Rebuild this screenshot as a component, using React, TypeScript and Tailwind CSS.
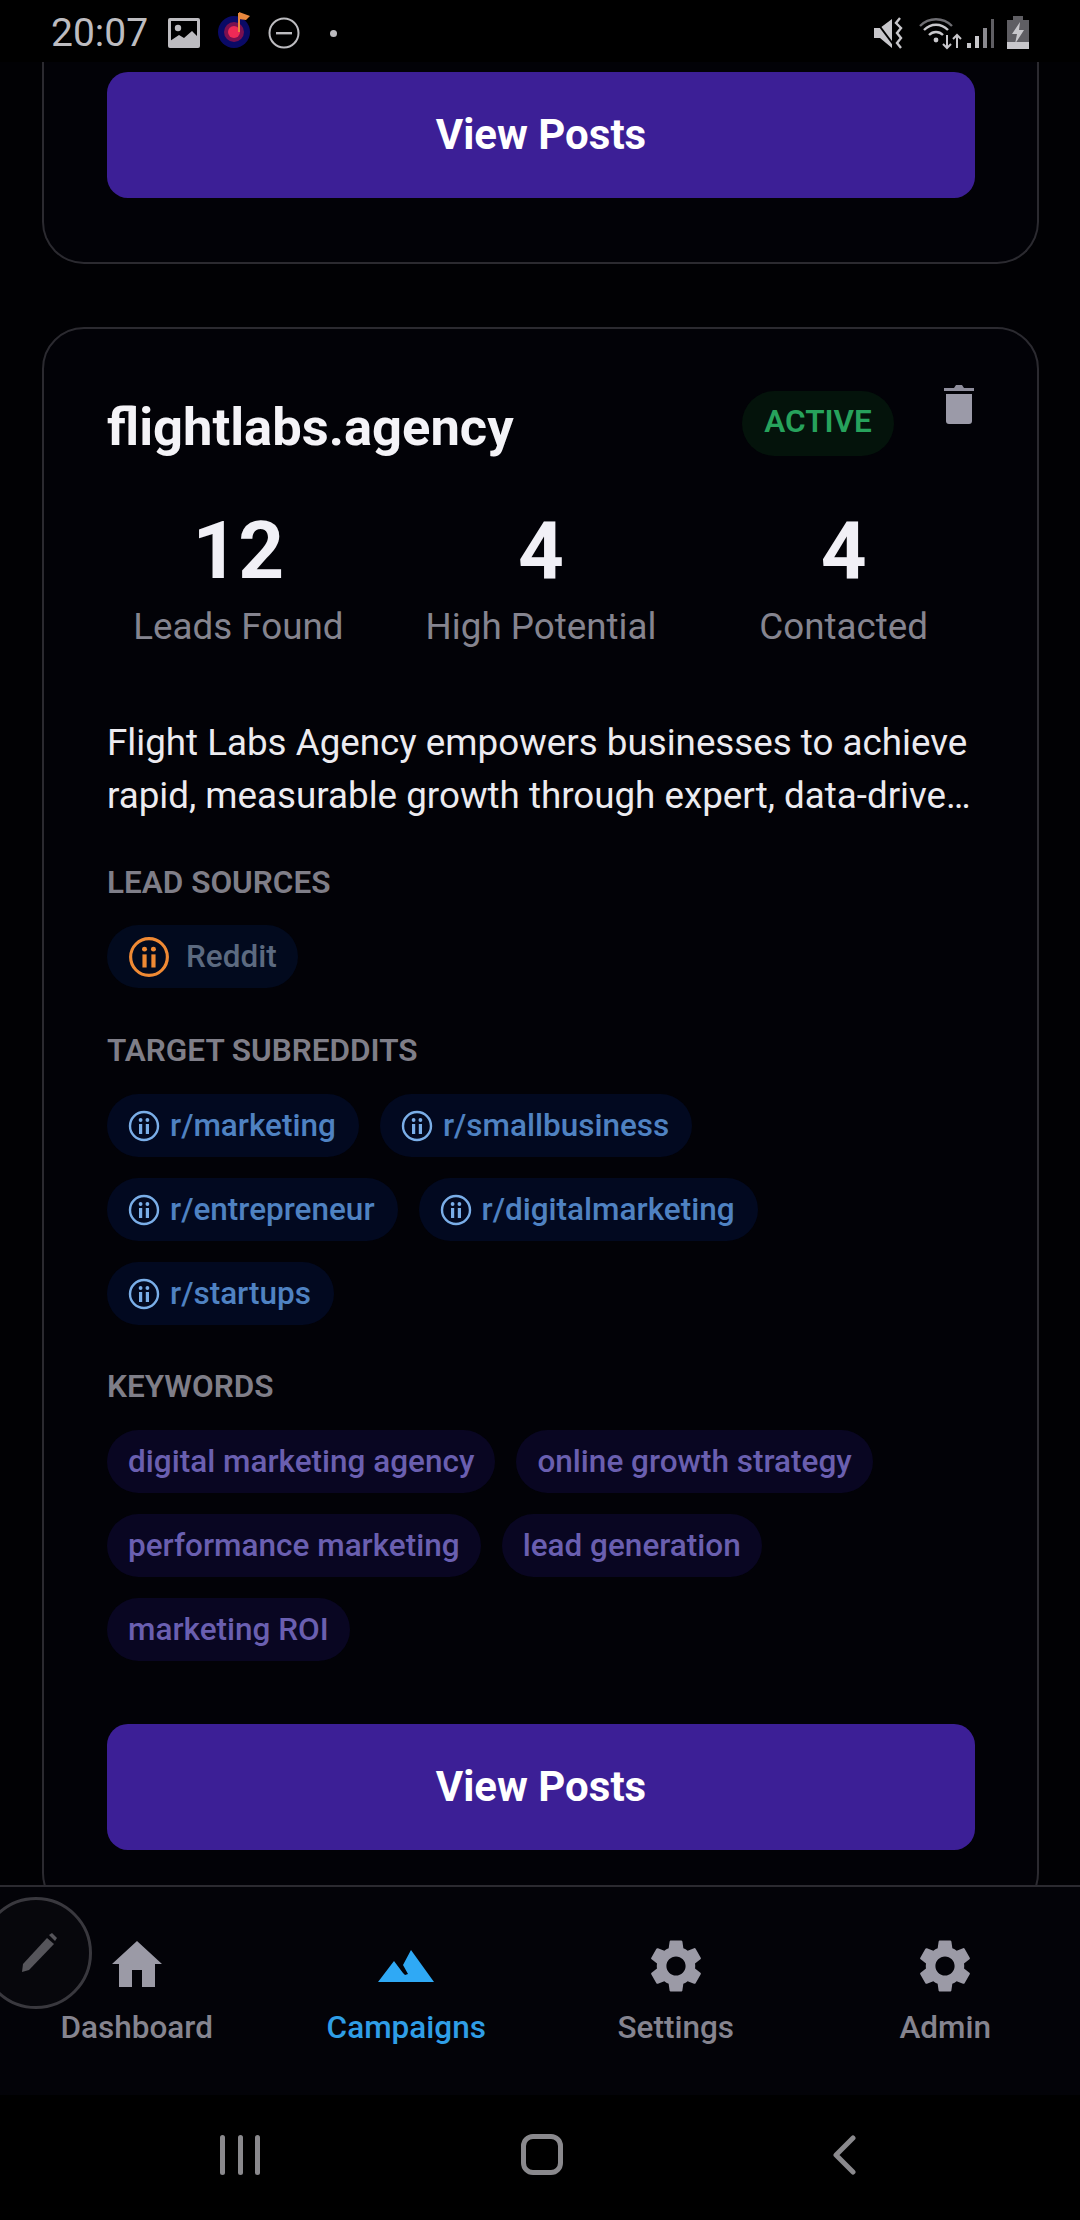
import React from "react";

const roboto = "font-['Roboto',sans-serif]";

function InfoIcon({ size, color }: { size: number; color: string }) {
  return (
    <svg width={size} height={size} viewBox="0 0 32 32" fill="none" className="shrink-0">
      <circle cx="16" cy="16" r="14" stroke={color} strokeWidth="2.4" />
      <rect x="11" y="14" width="3.2" height="10" fill={color} />
      <rect x="17.8" y="14" width="3.2" height="10" fill={color} />
      <circle cx="12.6" cy="10" r="1.9" fill={color} />
      <circle cx="19.4" cy="10" r="1.9" fill={color} />
    </svg>
  );
}

function SubTag({ label }: { label: string }) {
  return (
    <div className="flex h-[63px] items-center gap-[10px] rounded-full bg-[#020920] pl-[21px] pr-[23px] text-[31.5px] font-medium text-[#4f82c2]">
      <InfoIcon size={32} color="#7aaee8" />
      <span>{label}</span>
    </div>
  );
}

function KeyTag({ label }: { label: string }) {
  return (
    <div className="flex h-[63px] items-center rounded-full bg-[#090622] px-[21px] text-[31.5px] font-medium text-[#6a5fb0]">
      {label}
    </div>
  );
}

function Stat({ value, label }: { value: string; label: string }) {
  return (
    <div className="flex flex-col items-center">
      <div className="text-[80px] leading-[92px] font-bold text-[#f1f0f6]">{value}</div>
      <div className="mt-[8px] text-[36.75px] leading-[44px] text-[#85848f]">{label}</div>
    </div>
  );
}

function SectionLabel({ children }: { children: React.ReactNode }) {
  return <div className="text-[31.5px] leading-[42px] font-semibold text-[#7f7e88]">{children}</div>;
}

function ViewPosts() {
  return (
    <button className="flex h-[126px] w-full items-center justify-center rounded-[21px] bg-[#3c1f96] pb-[2px] text-[42px] font-bold text-white">
      View Posts
    </button>
  );
}

function GearIcon() {
  return (
    <svg width="64" height="64" viewBox="0 0 24 24" fill="#9b9aa6">
      <path d="M19.14 12.94c.04-.3.06-.61.06-.94 0-.32-.02-.64-.07-.94l2.03-1.58a.49.49 0 0 0 .12-.61l-1.92-3.32a.488.488 0 0 0-.59-.22l-2.39.96c-.5-.38-1.03-.7-1.62-.94l-.36-2.54a.484.484 0 0 0-.48-.41h-3.84c-.24 0-.43.17-.47.41l-.36 2.54c-.59.24-1.13.57-1.62.94l-2.39-.96c-.22-.08-.47 0-.59.22L2.74 8.87c-.12.21-.08.47.12.61l2.03 1.58c-.05.3-.09.63-.09.94s.02.64.07.94l-2.03 1.58a.49.49 0 0 0-.12.61l1.92 3.32c.12.22.37.29.59.22l2.39-.96c.5.38 1.03.7 1.62.94l.36 2.54c.05.24.24.41.48.41h3.84c.24 0 .44-.17.47-.41l.36-2.54c.59-.24 1.13-.56 1.62-.94l2.39.96c.22.08.47 0 .59-.22l1.92-3.32c.12-.22.07-.47-.12-.61l-2.01-1.58zM12 15.6c-1.98 0-3.6-1.62-3.6-3.6s1.62-3.6 3.6-3.6 3.6 1.62 3.6 3.6-1.62 3.6-3.6 3.6z" />
    </svg>
  );
}

function Tab({ icon, label, active }: { icon: React.ReactNode; label: string; active?: boolean }) {
  return (
    <div className="flex flex-1 flex-col items-center">
      <div className="flex h-[70px] items-center justify-center">{icon}</div>
      <div className={`mt-[9px] text-[31.5px] leading-[36px] font-medium ${active ? "text-[#2f9ee6]" : "text-[#85848f]"}`}>
        {label}
      </div>
    </div>
  );
}

function StatusBar() {
  return (
    <div className="flex h-[62px] shrink-0 items-center justify-between bg-black pt-[4px] pl-[51px] pr-[51px]">
      <div className="flex items-center">
        <span className="text-[39px] leading-none text-[#bdbcc0]">20:07</span>
        <svg width="32" height="30" viewBox="0 0 32 30" className="ml-[20px]">
          <rect width="32" height="30" rx="2" fill="#bdbcc0" />
          <rect x="3" y="3" width="26" height="20" fill="#000" />
          <circle cx="10" cy="10" r="3.2" fill="#bdbcc0" />
          <path d="M2 28V23L11 17L16 20L24 13L30 19V28Z" fill="#bdbcc0" />
        </svg>
        <svg width="34" height="38" viewBox="0 0 34 38" className="ml-[18px] -mt-[6px]">
          <circle cx="16" cy="21" r="16" fill="#0a0a66" />
          <circle cx="16" cy="21" r="10" fill="#7a1050" />
          <circle cx="16" cy="21" r="6" fill="#ee2a56" />
          <path d="M20 21V2H22V21Z" fill="#e8873e" />
          <path d="M21 1L32 5L28 9L21 8Z" fill="#e8873e" />
        </svg>
        <svg width="32" height="32" viewBox="0 0 32 32" className="ml-[16px]" fill="none">
          <circle cx="16" cy="16" r="14.5" stroke="#bdbcc0" strokeWidth="2" />
          <rect x="8" y="15" width="16" height="2.4" fill="#bdbcc0" />
        </svg>
        <span className="ml-[30px] h-[7px] w-[7px] rounded-full bg-[#bdbcc0]" />
      </div>
      <div className="flex items-center">
        <svg width="32" height="34" viewBox="0 0 32 34" fill="none">
          <path d="M1 12H7L19 3V32L7 22H1Z" fill="#c8c7cb" />
          <path d="M2 4L20 28" stroke="#000" strokeWidth="2" />
          <path d="M27 2L23 7L28 12L24 17L28 22L24 27L28 32" stroke="#c8c7cb" strokeWidth="2.4" />
        </svg>
        <svg width="44" height="34" viewBox="0 0 44 34" fill="none" className="ml-[13px]">
          <path d="M2 10C11 1 25 1 34 10" stroke="#6e6d72" strokeWidth="2.4" />
          <path d="M6 14C13 7 23 7 30 14" stroke="#c8c7cb" strokeWidth="2.4" />
          <path d="M11 19C15 15 21 15 25 19" stroke="#c8c7cb" strokeWidth="2.4" />
          <circle cx="18" cy="24" r="2.4" fill="#c8c7cb" />
          <path d="M29 19V32M25 28L29 32L33 28" stroke="#c8c7cb" strokeWidth="2" />
          <path d="M39 32V19M35 23L39 19L43 23" stroke="#c8c7cb" strokeWidth="2" />
        </svg>
        <svg width="28" height="32" viewBox="0 0 28 32" className="ml-[5px]">
          <rect x="0" y="26" width="4" height="5" fill="#c8c7cb" />
          <rect x="8" y="19" width="4" height="12" fill="#c8c7cb" />
          <rect x="16" y="11" width="4" height="20" fill="#8a898e" />
          <rect x="24" y="2" width="3" height="29" fill="#5f5e63" />
        </svg>
        <svg width="22" height="34" viewBox="0 0 22 34" className="ml-[12px]">
          <rect x="6" y="0" width="10" height="4" fill="#5f5e63" />
          <rect x="0" y="4" width="22" height="26" fill="#5f5e63" />
          <rect x="0" y="26" width="22" height="7" fill="#c8c7cb" />
          <path d="M13 6L5 18H10L8 28L17 14H12Z" fill="#c8c7cb" />
        </svg>
      </div>
    </div>
  );
}

export default function App() {
  return (
    <div className={`flex h-[2220px] w-[1080px] flex-col overflow-hidden bg-black ${roboto}`}>
      <StatusBar />

      <main className="min-h-0 flex-1 overflow-hidden bg-[#010104] pl-[42px] pr-[41px]">
        <div className="rounded-b-[42px] border-x-2 border-b-2 border-[#2b2a30] bg-[#020207] pl-[63px] pr-[62px] pt-[10px] pb-[64px]">
          <ViewPosts />
        </div>

        <div className="mt-[63px] rounded-[42px] border-2 border-[#2b2a30] bg-[#020207] pl-[63px] pr-[62px] pt-[58px]">
          <div className="flex items-start">
            <h2 className="mt-[10px] flex-1 text-[52.5px] leading-[60px] font-bold text-[#f4f3f7]">flightlabs.agency</h2>
            <div className="mt-[4px] mr-[49px] flex h-[65px] w-[152px] items-center justify-center rounded-full bg-[#04130b] pb-[3px] text-[31.5px] font-semibold text-[#27a25c]">
              ACTIVE
            </div>
            <svg width="32" height="40" viewBox="0 0 32 40" className="-mt-[3px]">
              <path d="M1 4H11L13 1H19L21 4H31V7H1Z" fill="#8f8e9c" />
              <path d="M3 10H29V37C29 39 28 40 26 40H6C4 40 3 39 3 37Z" fill="#9b9aa8" />
            </svg>
          </div>

          <div className="-mx-[20px] mt-[48px] grid grid-cols-3">
            <Stat value="12" label="Leads Found" />
            <Stat value="4" label="High Potential" />
            <Stat value="4" label="Contacted" />
          </div>

          <p className="mt-[68px] text-[36.75px] leading-[52.5px] text-[#ecebf0]">
            Flight Labs Agency empowers businesses to achieve
            <br />
            rapid, measurable growth through expert, data-drive…
          </p>

          <div className="mt-[40px]"><SectionLabel>LEAD SOURCES</SectionLabel></div>
          <div className="mt-[21px] flex">
            <div className="flex h-[63px] items-center gap-[16px] rounded-full bg-[#020a1e] px-[21px] text-[31.5px] font-medium text-[#5c6a80]">
              <InfoIcon size={42} color="#f08a34" />
              <span>Reddit</span>
            </div>
          </div>

          <div className="mt-[42px]"><SectionLabel>TARGET SUBREDDITS</SectionLabel></div>
          <div className="mt-[22px] flex flex-wrap gap-x-[21px] gap-y-[21px]">
            {["r/marketing", "r/smallbusiness", "r/entrepreneur", "r/digitalmarketing", "r/startups"].map((s) => (
              <SubTag key={s} label={s} />
            ))}
          </div>

          <div className="mt-[41px]"><SectionLabel>KEYWORDS</SectionLabel></div>
          <div className="mt-[22px] flex flex-wrap gap-x-[21px] gap-y-[21px]">
            {["digital marketing agency", "online growth strategy", "performance marketing", "lead generation", "marketing ROI"].map((s) => (
              <KeyTag key={s} label={s} />
            ))}
          </div>

          <div className="mt-[63px] pb-[63px]"><ViewPosts /></div>
        </div>
      </main>

      <nav className="relative flex h-[210px] shrink-0 border-t-2 border-[#2b2a30] bg-[#030308] pl-[2px] pt-[44px]">
        <div className="absolute left-[-20px] top-[10px] flex h-[112px] w-[112px] items-center justify-center rounded-full border-[3px] border-[#39383e] bg-[#07070c]">
          <svg width="40" height="42" viewBox="0 0 40 42" className="ml-[6px]">
            <path d="M4 32L28 6L35 12L10 38L3 40Z" fill="#56555b" />
            <path d="M30 3L33 1L38 6L36 9Z" fill="#56555b" />
          </svg>
        </div>
        <Tab
          label="Dashboard"
          icon={
            <svg width="50" height="46" viewBox="0 0 50 46" className="-mt-[5px]">
              <path d="M25 0L50 23H43V46H30V29H20V46H7V23H0Z" fill="#9b9aa6" />
            </svg>
          }
        />
        <Tab
          active
          label="Campaigns"
          icon={
            <svg width="56" height="32" viewBox="0 0 56 32">
              <path d="M33 0L56 32H0L16 11L25 23L27 25L30 24L25 15Z" fill="#2fa9f5" />
            </svg>
          }
        />
        <Tab label="Settings" icon={<GearIcon />} />
        <Tab label="Admin" icon={<GearIcon />} />
      </nav>

      <div className="h-[125px] shrink-0 bg-black pt-[39px] pl-[4px]">
        <div className="mx-auto grid w-[906px] grid-cols-3 items-center justify-items-center">
          <div className="flex w-[40px] justify-between">
            <span className="h-[40px] w-[5px] rounded-full bg-[#8a898d]" />
            <span className="h-[40px] w-[5px] rounded-full bg-[#8a898d]" />
            <span className="h-[40px] w-[5px] rounded-full bg-[#8a898d]" />
          </div>
          <div className="h-[41px] w-[42px] rounded-[12px] border-[5px] border-[#8a898d]" />
          <svg width="24" height="40" viewBox="0 0 24 40" fill="none">
            <path d="M21 3L4 20L21 37" stroke="#8a898d" strokeWidth="5" strokeLinecap="round" strokeLinejoin="round" />
          </svg>
        </div>
      </div>
    </div>
  );
}
